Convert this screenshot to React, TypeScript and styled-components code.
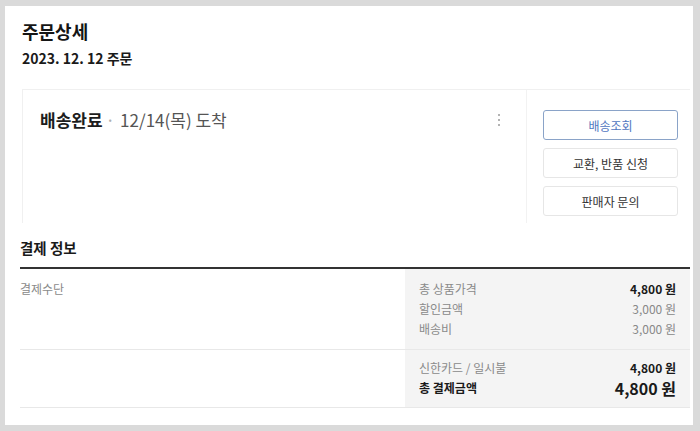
import React from 'react';
import styled, { createGlobalStyle } from 'styled-components';

const GlobalStyle = createGlobalStyle`
  html, body {
    margin: 0;
    padding: 0;
    background: #dadada;
  }
  body {
    font-family: "Noto Sans CJK KR", "Noto Sans", "Liberation Sans", sans-serif;
    color: #222;
  }
  * { box-sizing: border-box; }
`;

const Page = styled.div`
  width: 700px;
  height: 431px;
  padding: 6px 7px 6px 5px;
`;

const Panel = styled.div`
  background: #fff;
  height: 100%;
  padding: 13px 3px 0 15px;
`;

const Title = styled.h1`
  margin: 0 0 0 2px;
  font-size: 18px;
  line-height: 24px;
  font-weight: 700;
  color: #151515;
`;

const OrderDate = styled.div`
  margin: 6px 0 0 2px;
  font-size: 14px;
  line-height: 18px;
  font-weight: 700;
  color: #1a1a1a;
`;

const Card = styled.div`
  display: flex;
  margin: 22px 0 0 2px;
  height: 134px;
  border-top: 1px solid #f0f0f0;
  border-left: 1px solid #f0f0f0;
`;

const CardMain = styled.div`
  flex: 1;
  display: flex;
  align-items: flex-start;
  justify-content: space-between;
  padding: 19px 26px 0 17px;
`;

const Status = styled.div`
  font-size: 17px;
  line-height: 22px;
  color: #555;

  strong {
    font-weight: 700;
    color: #1d1d1d;
  }
`;

const Dot = styled.span`
  color: #b0b0b0;
  margin: 0 5px 0 3px;
`;

const Kebab = styled.button`
  display: flex;
  flex-direction: column;
  gap: 3px;
  margin-top: 5px;
  padding: 0;
  border: 0;
  background: none;

  span {
    width: 2px;
    height: 2px;
    border-radius: 50%;
    background: #9a9a9a;
  }
`;

const CardSide = styled.div`
  width: 164px;
  display: flex;
  flex-direction: column;
  gap: 8px;
  padding: 20px 0 0 16px;
  border-left: 1px solid #f2f2f2;
`;

const ActionButton = styled.button<{ $primary?: boolean }>`
  width: 135px;
  height: 30px;
  border-radius: 3px;
  background: #fff;
  font-family: inherit;
  font-size: 12px;
  color: ${p => (p.$primary ? '#4f76c0' : '#333')};
  border: 1px solid ${p => (p.$primary ? '#8aa3c8' : '#e6e6e6')};
  cursor: pointer;
`;

const SectionTitle = styled.h2`
  margin: 16px 0 0;
  padding-bottom: 10px;
  font-size: 14.5px;
  line-height: 18px;
  font-weight: 700;
  color: #1a1a1a;
  border-bottom: 2px solid #333;
`;

const Row = styled.div`
  display: flex;
  border-bottom: 1px solid #e8e8e8;
`;

const RowLabel = styled.div`
  width: 385px;
  padding-top: 10px;
  font-size: 12px;
  line-height: 20px;
  color: #8a8a8a;
`;

const RowBody = styled.div<{ $pad: string }>`
  flex: 1;
  background: #f4f4f4;
  padding: ${p => p.$pad};
`;

const Line = styled.div<{ $height: number }>`
  display: flex;
  justify-content: space-between;
  align-items: center;
  font-size: 12px;
  line-height: ${p => p.$height}px;
  color: #888;
`;

const Name = styled.span<{ $strong?: boolean }>`
  color: ${p => (p.$strong ? '#1a1a1a' : '#8a8a8a')};
  font-weight: ${p => (p.$strong ? 700 : 400)};
`;

const Amount = styled.span<{ $strong?: boolean; $big?: boolean }>`
  font-size: ${p => (p.$big ? '16px' : '12px')};
  color: ${p => (p.$strong ? '#1a1a1a' : '#888')};
  font-weight: ${p => (p.$strong ? 700 : 400)};
`;

const priceLines = [
  { name: '총 상품가격', amount: '4,800 원', strong: true },
  { name: '할인금액', amount: '3,000 원' },
  { name: '배송비', amount: '3,000 원' },
];

export default function App() {
  return (
    <>
      <GlobalStyle />
      <Page>
        <Panel>
          <Title>주문상세</Title>
          <OrderDate>2023. 12. 12 주문</OrderDate>

          <Card>
            <CardMain>
              <Status>
                <strong>배송완료</strong>
                <Dot>·</Dot>12/14(목) 도착
              </Status>
              <Kebab aria-label="더보기">
                <span />
                <span />
                <span />
              </Kebab>
            </CardMain>
            <CardSide>
              <ActionButton $primary>배송조회</ActionButton>
              <ActionButton>교환, 반품 신청</ActionButton>
              <ActionButton>판매자 문의</ActionButton>
            </CardSide>
          </Card>

          <SectionTitle>결제 정보</SectionTitle>
          <Row>
            <RowLabel>결제수단</RowLabel>
            <RowBody $pad="10px 14px 10px 14px">
              {priceLines.map(l => (
                <Line key={l.name} $height={20}>
                  <Name>{l.name}</Name>
                  <Amount $strong={l.strong}>{l.amount}</Amount>
                </Line>
              ))}
            </RowBody>
          </Row>
          <Row>
            <RowLabel />
            <RowBody $pad="8px 14px 8px 14px">
              <Line $height={19}>
                <Name>신한카드 / 일시불</Name>
                <Amount $strong>4,800 원</Amount>
              </Line>
              <Line $height={22}>
                <Name $strong>총 결제금액</Name>
                <Amount $strong $big>4,800 원</Amount>
              </Line>
            </RowBody>
          </Row>
        </Panel>
      </Page>
    </>
  );
}
